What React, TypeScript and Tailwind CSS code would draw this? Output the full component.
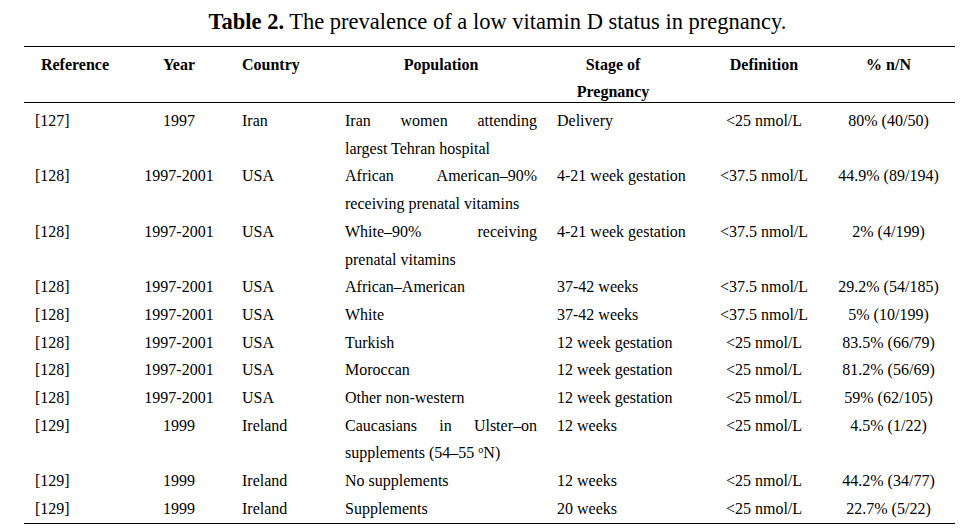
type Row = {
  ref: string;
  year: string;
  country: string;
  population: React.ReactNode[];
  stage: string;
  definition: string;
  pct: string;
};

const rows: Row[] = [
  {
    ref: "[127]",
    year: "1997",
    country: "Iran",
    population: ["Iran women attending", "largest Tehran hospital"],
    stage: "Delivery",
    definition: "<25 nmol/L",
    pct: "80% (40/50)",
  },
  {
    ref: "[128]",
    year: "1997-2001",
    country: "USA",
    population: ["African American–90%", "receiving prenatal vitamins"],
    stage: "4-21 week gestation",
    definition: "<37.5 nmol/L",
    pct: "44.9% (89/194)",
  },
  {
    ref: "[128]",
    year: "1997-2001",
    country: "USA",
    population: ["White–90% receiving", "prenatal vitamins"],
    stage: "4-21 week gestation",
    definition: "<37.5 nmol/L",
    pct: "2% (4/199)",
  },
  {
    ref: "[128]",
    year: "1997-2001",
    country: "USA",
    population: ["African–American"],
    stage: "37-42 weeks",
    definition: "<37.5 nmol/L",
    pct: "29.2% (54/185)",
  },
  {
    ref: "[128]",
    year: "1997-2001",
    country: "USA",
    population: ["White"],
    stage: "37-42 weeks",
    definition: "<37.5 nmol/L",
    pct: "5% (10/199)",
  },
  {
    ref: "[128]",
    year: "1997-2001",
    country: "USA",
    population: ["Turkish"],
    stage: "12 week gestation",
    definition: "<25 nmol/L",
    pct: "83.5% (66/79)",
  },
  {
    ref: "[128]",
    year: "1997-2001",
    country: "USA",
    population: ["Moroccan"],
    stage: "12 week gestation",
    definition: "<25 nmol/L",
    pct: "81.2% (56/69)",
  },
  {
    ref: "[128]",
    year: "1997-2001",
    country: "USA",
    population: ["Other non-western"],
    stage: "12 week gestation",
    definition: "<25 nmol/L",
    pct: "59% (62/105)",
  },
  {
    ref: "[129]",
    year: "1999",
    country: "Ireland",
    population: [
      "Caucasians in Ulster–on",
      <>
        supplements (54–55 <sup className="text-[10px]">o</sup>N)
      </>,
    ],
    stage: "12 weeks",
    definition: "<25 nmol/L",
    pct: "4.5% (1/22)",
  },
  {
    ref: "[129]",
    year: "1999",
    country: "Ireland",
    population: ["No supplements"],
    stage: "12 weeks",
    definition: "<25 nmol/L",
    pct: "44.2% (34/77)",
  },
  {
    ref: "[129]",
    year: "1999",
    country: "Ireland",
    population: ["Supplements"],
    stage: "20 weeks",
    definition: "<25 nmol/L",
    pct: "22.7% (5/22)",
  },
];

const cols = "grid grid-cols-[102px_106px_105px_211px_152px_128px_127px]";

export default function App() {
  return (
    <div className="min-h-screen w-[970px] bg-white text-black font-['Liberation_Serif','Times_New_Roman',serif]">
      <div className="ml-[24px] w-[931px]">
        {/* Caption */}
        <div className="h-[46px] flex items-center justify-center text-[22.5px] pb-[2px] pl-[16px]">
          <span>
            <b>Table 2.</b> The prevalence of a low vitamin D status in pregnancy.
          </span>
        </div>

        {/* Header */}
        <div className={`${cols} border-t border-black h-[56px] pt-[4px] text-[16px] leading-[27px] font-bold`}>
          <div className="text-center">Reference</div>
          <div className="text-center">Year</div>
          <div className="pl-[10px]">Country</div>
          <div className="pl-[8px] pr-[11px] text-center">Population</div>
          <div className="pr-[22px] text-center">
            Stage of
            <br />
            Pregnancy
          </div>
          <div className="text-center">Definition</div>
          <div className="pr-[6px] text-center">% n/N</div>
        </div>

        {/* Body */}
        <div className="border-t border-black pt-[4px] text-[16px] leading-[27.7px]">
          {rows.map((r, i) => (
            <div key={i} className={cols}>
              <div className="pl-[11px]">{r.ref}</div>
              <div className="text-center">{r.year}</div>
              <div className="pl-[10px]">{r.country}</div>
              <div className="pl-[8px] pr-[11px]">
                {r.population.map((line, j) => (
                  <div
                    key={j}
                    className={
                      r.population.length > 1 && j < r.population.length - 1
                        ? "text-justify [text-align-last:justify]"
                        : ""
                    }
                  >
                    {line}
                  </div>
                ))}
              </div>
              <div className="pl-[9px] whitespace-nowrap">{r.stage}</div>
              <div className="text-center whitespace-nowrap">{r.definition}</div>
              <div className="pr-[6px] text-center whitespace-nowrap">{r.pct}</div>
            </div>
          ))}
        </div>
        <div className="border-t border-black" />
      </div>
    </div>
  );
}
